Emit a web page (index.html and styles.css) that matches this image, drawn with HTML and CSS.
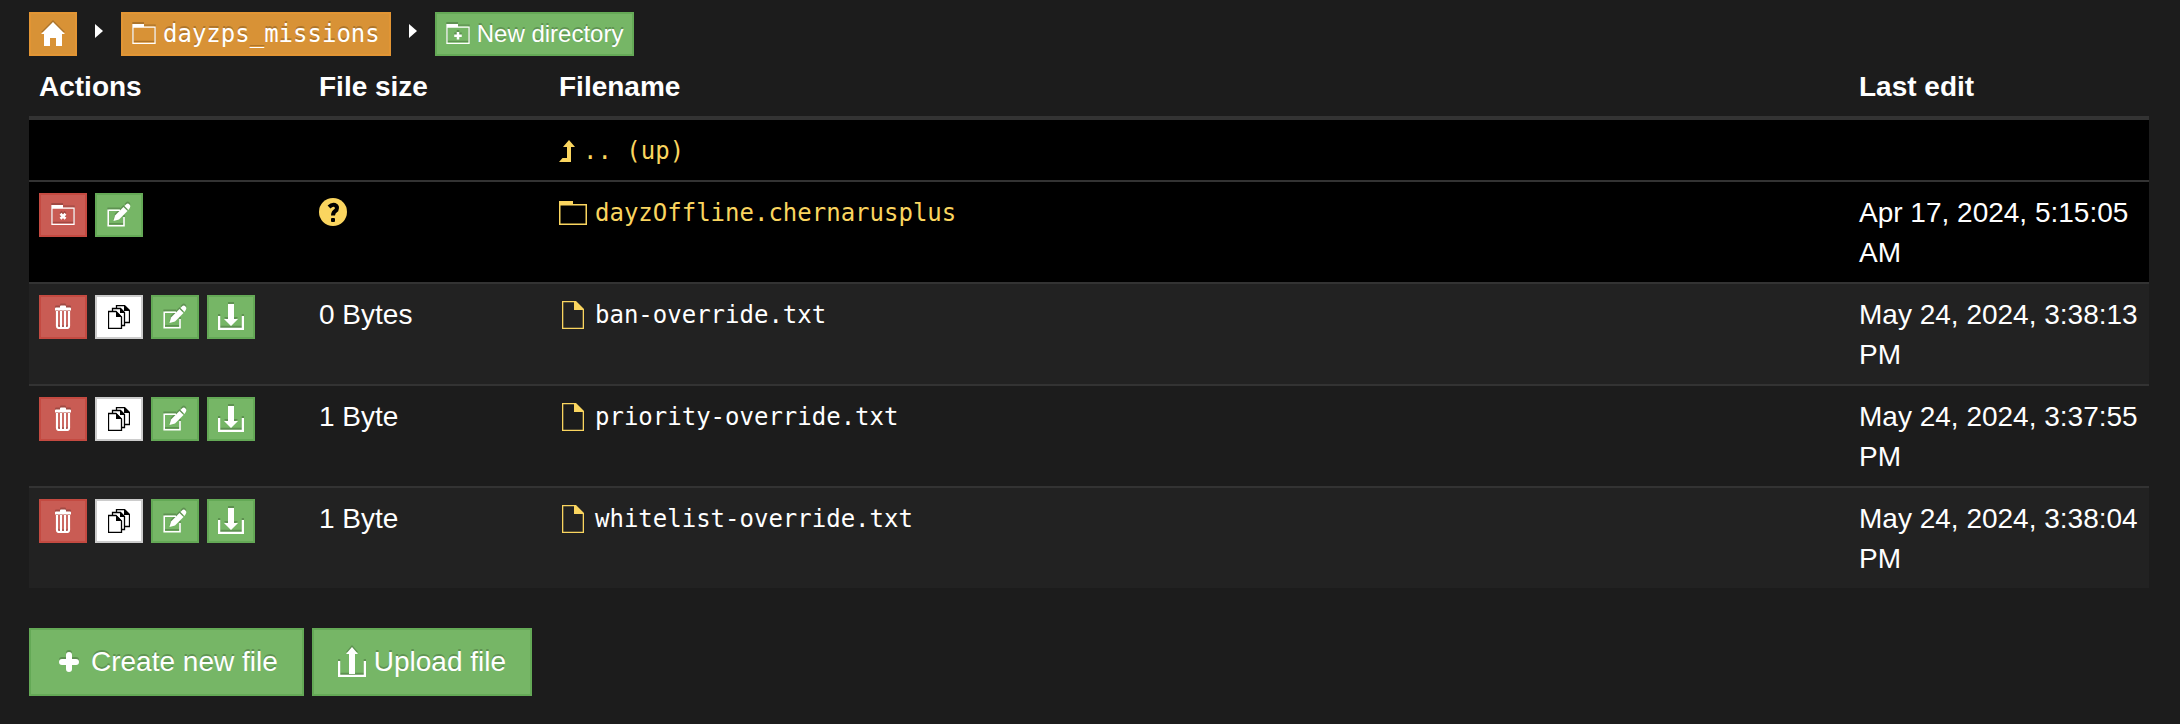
FILE: index.html
```
<!DOCTYPE html>
<html lang="en">
<head>
    <meta charset="UTF-8">
    <meta name="viewport" content="width=device-width, initial-scale=1.0">
    <title>File browser</title>
    <link rel="stylesheet" href="styles.css">
</head>
<body>
    <!-- Icon set -->
    <svg class="sprite" aria-hidden="true">
        <symbol id="i-home" viewBox="0 0 24 24"><path d="M12 0L24 12H21V24H15V16H9V24H3V12H0Z"/></symbol>
        <symbol id="i-folder" viewBox="0 0 28 24"><path d="M0 0H14V3H28V24H0ZM1.500 4.500V22.500H26.500V4.500Z" fill-rule="evenodd"/></symbol>
        <symbol id="i-folder-plus" viewBox="0 0 28 24"><path d="M0 0H14V3H28V24H0ZM1.500 4.500V22.500H26.500V4.500ZM12.500 9.500H15.500V12.500H18.500V15.500H15.500V18.500H12.500V15.500H9.500V12.500H12.500Z" fill-rule="evenodd"/></symbol>
        <symbol id="i-folder-x" viewBox="0 0 28 24"><path d="M0 0H14V3H28V24H0ZM1.500 4.500V22.500H26.500V4.500Z" fill-rule="evenodd"/><path d="M11 10.500L17 16.500M17 10.500L11 16.500" fill="none" stroke="currentColor" stroke-width="3"/></symbol>
        <symbol id="i-file" viewBox="0 0 22 28"><path d="M0 0H14L22 8V28H0ZM1.300 1.300V26.700H20.700V9H12V1.300Z" fill-rule="evenodd"/></symbol>
        <symbol id="i-edit" viewBox="0 0 24 24"><path d="M13 7.200H1.200V22.800H17V14" fill="none" stroke="currentColor" stroke-width="1.600"/><path d="M6.500 18L8 12.500L16.500 4L20.500 8L12 16.500Z"/><path d="M17.500 3L19.500 1Q21 0 22.500 1.500Q24 3 23 4.500L21.500 7Z"/></symbol>
        <symbol id="i-trash" viewBox="0 0 16 24"><path d="M5 2.500V1.500Q5 .5 6 .5H10Q11 .5 11 1.500V2.500H15Q16 2.500 16 3.500V5.500H0V3.500Q0 2.500 1 2.500Z"/><path d="M2 6V21Q2 23 4 23H12Q14 23 14 21V6M6 6V22M10 6V22" fill="none" stroke="currentColor" stroke-width="2.200"/></symbol>
        <symbol id="i-copy" viewBox="0 0 22 24"><g fill="#fff" stroke="#000" stroke-width="1.300"><path d="M8.500 .5H16.500L21.500 5.500V17.500H8.500Z"/><path d="M4.500 3.500H12.500L16.500 7.500V20.500H4.500Z"/><path d="M.5 6.500H8L13.500 12V23.500H.5Z"/></g><path d="M16 0L22 6H16ZM12 3L17 8H12ZM8 6L14 12H8Z" fill="#000"/></symbol>
        <symbol id="i-download" viewBox="0 0 26 26"><path d="M10 0H16V15H20L13 22L6 15H10Z"/><path d="M1 12V25H25V12" fill="none" stroke="currentColor" stroke-width="2.500"/></symbol>
        <symbol id="i-upload" viewBox="0 0 28 30"><path d="M14 0L20 7H17V27H11V7H8Z"/><path d="M1 14V29H27V14" fill="none" stroke="currentColor" stroke-width="2.500"/></symbol>
        <symbol id="i-plus" viewBox="0 0 28 20"><path d="M14 3V17M7 10H21" stroke="currentColor" stroke-width="6" stroke-linecap="round"/></symbol>
        <symbol id="i-up" viewBox="0 0 16 22"><path d="M10 0L16 7H12V22H0L3.500 18H8V7H4Z"/></symbol>
        <symbol id="i-help" viewBox="0 0 28 28"><circle cx="14" cy="14" r="14"/><path d="M10 9Q13 6 16 7Q19 8.500 17.500 12Q14 14 14 17.500" fill="none" stroke="#000" stroke-width="4"/><rect x="12" y="20" width="4" height="4" rx="1" fill="#000"/></symbol>
    </svg>

    <main class="container">
        <nav class="breadcrumbs" aria-label="Breadcrumb">
            <a href="#" class="btn btn-sm btn-icon btn-warning" aria-label="Home"><svg class="icon icon-home"><use href="#i-home"/></svg></a>
            <span class="caret"></span>
            <a href="#" class="btn btn-sm btn-warning"><svg class="icon icon-folder"><use href="#i-folder"/></svg><span class="mono">dayzps_missions</span></a>
            <span class="caret"></span>
            <button type="button" class="btn btn-sm btn-success"><svg class="icon icon-folder"><use href="#i-folder-plus"/></svg>New directory</button>
        </nav>

        <table class="files">
            <thead>
                <tr>
                    <th class="col-actions">Actions</th>
                    <th class="col-size">File size</th>
                    <th>Filename</th>
                    <th class="col-date">Last edit</th>
                </tr>
            </thead>
            <tbody>
                <tr class="dir">
                    <td></td>
                    <td></td>
                    <td><a href="#" class="name"><svg class="icon icon-up"><use href="#i-up"/></svg>.. (up)</a></td>
                    <td></td>
                </tr>
                <tr class="dir">
                    <td>
                        <div class="actions">
                            <button type="button" class="btn btn-sm btn-icon btn-danger" aria-label="Delete directory"><svg class="icon icon-folder"><use href="#i-folder-x"/></svg></button>
                            <button type="button" class="btn btn-sm btn-icon btn-success" aria-label="Rename"><svg class="icon icon-edit"><use href="#i-edit"/></svg></button>
                        </div>
                    </td>
                    <td><svg class="icon icon-help" role="img" aria-label="Unknown size"><use href="#i-help"/></svg></td>
                    <td><a href="#" class="name"><svg class="icon icon-dir"><use href="#i-folder"/></svg>dayzOffline.chernarusplus</a></td>
                    <td>Apr 17, 2024, 5:15:05 AM</td>
                </tr>
                <tr>
                    <td>
                        <div class="actions">
                            <button type="button" class="btn btn-sm btn-icon btn-danger" aria-label="Delete"><svg class="icon icon-trash"><use href="#i-trash"/></svg></button>
                            <button type="button" class="btn btn-sm btn-icon btn-default" aria-label="Copy"><svg class="icon icon-copy"><use href="#i-copy"/></svg></button>
                            <button type="button" class="btn btn-sm btn-icon btn-success" aria-label="Rename"><svg class="icon icon-edit"><use href="#i-edit"/></svg></button>
                            <button type="button" class="btn btn-sm btn-icon btn-success" aria-label="Download"><svg class="icon icon-download"><use href="#i-download"/></svg></button>
                        </div>
                    </td>
                    <td>0 Bytes</td>
                    <td><a href="#" class="name"><svg class="icon icon-file"><use href="#i-file"/></svg>ban-override.txt</a></td>
                    <td>May 24, 2024, 3:38:13 PM</td>
                </tr>
                <tr>
                    <td>
                        <div class="actions">
                            <button type="button" class="btn btn-sm btn-icon btn-danger" aria-label="Delete"><svg class="icon icon-trash"><use href="#i-trash"/></svg></button>
                            <button type="button" class="btn btn-sm btn-icon btn-default" aria-label="Copy"><svg class="icon icon-copy"><use href="#i-copy"/></svg></button>
                            <button type="button" class="btn btn-sm btn-icon btn-success" aria-label="Rename"><svg class="icon icon-edit"><use href="#i-edit"/></svg></button>
                            <button type="button" class="btn btn-sm btn-icon btn-success" aria-label="Download"><svg class="icon icon-download"><use href="#i-download"/></svg></button>
                        </div>
                    </td>
                    <td>1 Byte</td>
                    <td><a href="#" class="name"><svg class="icon icon-file"><use href="#i-file"/></svg>priority-override.txt</a></td>
                    <td>May 24, 2024, 3:37:55 PM</td>
                </tr>
                <tr>
                    <td>
                        <div class="actions">
                            <button type="button" class="btn btn-sm btn-icon btn-danger" aria-label="Delete"><svg class="icon icon-trash"><use href="#i-trash"/></svg></button>
                            <button type="button" class="btn btn-sm btn-icon btn-default" aria-label="Copy"><svg class="icon icon-copy"><use href="#i-copy"/></svg></button>
                            <button type="button" class="btn btn-sm btn-icon btn-success" aria-label="Rename"><svg class="icon icon-edit"><use href="#i-edit"/></svg></button>
                            <button type="button" class="btn btn-sm btn-icon btn-success" aria-label="Download"><svg class="icon icon-download"><use href="#i-download"/></svg></button>
                        </div>
                    </td>
                    <td>1 Byte</td>
                    <td><a href="#" class="name"><svg class="icon icon-file"><use href="#i-file"/></svg>whitelist-override.txt</a></td>
                    <td>May 24, 2024, 3:38:04 PM</td>
                </tr>
            </tbody>
        </table>

        <div class="footer-actions">
            <button type="button" class="btn btn-lg btn-success"><svg class="icon icon-plus"><use href="#i-plus"/></svg>Create new file</button>
            <button type="button" class="btn btn-lg btn-success"><svg class="icon icon-upload"><use href="#i-upload"/></svg>Upload file</button>
        </div>
    </main>
</body>
</html>
```
FILE: styles.css
```
* { margin: 0; padding: 0; box-sizing: border-box; }
body {
    font-family: "Helvetica Neue", Helvetica, "Liberation Sans", Arial, sans-serif;
    font-size: 28px;
    line-height: 40px;
    background: #1c1c1c;
    color: #fff;
}
a { text-decoration: none; }
.sprite { display: none; }
.container { padding: 12px 31px 18px 29px; }
.mono { font-family: "DejaVu Sans Mono", monospace; }

/* Icons */
.icon {
    flex: none;
    display: block;
    fill: currentColor;
    overflow: visible;
}
.icon-home { width: 24px; height: 24px; }
.icon-folder { width: 24px; height: 20px; }
.icon-dir { width: 28px; height: 24px; }
.icon-file { width: 22px; height: 28px; margin: 0 3px; }
.icon-edit { width: 24px; height: 24px; }
.icon-trash { width: 16px; height: 24px; }
.icon-copy { width: 22px; height: 24px; }
.icon-download { width: 26px; height: 26px; }
.icon-upload { width: 28px; height: 30px; }
.icon-plus { width: 28px; height: 20px; }
.icon-up { width: 16px; height: 22px; }
.icon-help {
    width: 28px;
    height: 28px;
    margin-top: 5px;
    color: #fad55f;
}

/* Buttons */
.btn {
    display: inline-flex;
    align-items: center;
    justify-content: center;
    border: 2px solid transparent;
    font-family: inherit;
    color: #fff;
    text-shadow: 0 -2px 0 rgba(0,0,0,0.2);
    white-space: nowrap;
    cursor: pointer;
}
.btn .icon { filter: drop-shadow(0 -2px 0 rgba(0,0,0,0.2)); }
.btn-sm {
    gap: 7px;
    height: 44px;
    padding: 0 9px;
    font-size: 24px;
    line-height: 36px;
}
.btn-icon { width: 48px; padding: 0; }
.btn-lg {
    gap: 8px;
    padding: 12px 24px;
    font-size: 28px;
    line-height: 40px;
}
.btn-warning { background: #d89236; border-color: #e29534; }
.btn-success { background: #76b666; border-color: #64a956; }
.btn-danger { background: #c95c54; border-color: #c44a41; }
.btn-default { background: #fff; border-color: #ccc; color: #000; }
.btn-default .icon { filter: none; }

.breadcrumbs { display: flex; }
.caret {
    margin: 12px 18px 0;
    width: 8px;
    height: 14px;
    border: 7px solid transparent;
    border-left: 8px solid #fff;
    border-right: 0;
}

/* File list */
.files {
    width: 100%;
    table-layout: fixed;
    border-spacing: 0;
}
.col-actions { width: 280px; }
.col-size { width: 240px; }
.col-date { width: 300px; }
th, td {
    padding: 11px 10px 9px;
    text-align: left;
    vertical-align: top;
}
th { border-bottom: 4px solid #333; }
td { border-top: 2px solid #333; }
tbody tr:first-child td { border-top: 0; }
tbody tr:nth-child(odd) { background: #222; }
tbody tr.dir { background: #000; }
.actions {
    display: flex;
    gap: 8px;
}
.name {
    display: flex;
    align-items: center;
    gap: 8px;
    height: 40px;
    font-family: "DejaVu Sans Mono", monospace;
    font-size: 24px;
    color: #fff;
}
.dir .name, .name .icon { color: #fad55f; }

.footer-actions {
    display: flex;
    gap: 8px;
    margin-top: 40px;
}
```
